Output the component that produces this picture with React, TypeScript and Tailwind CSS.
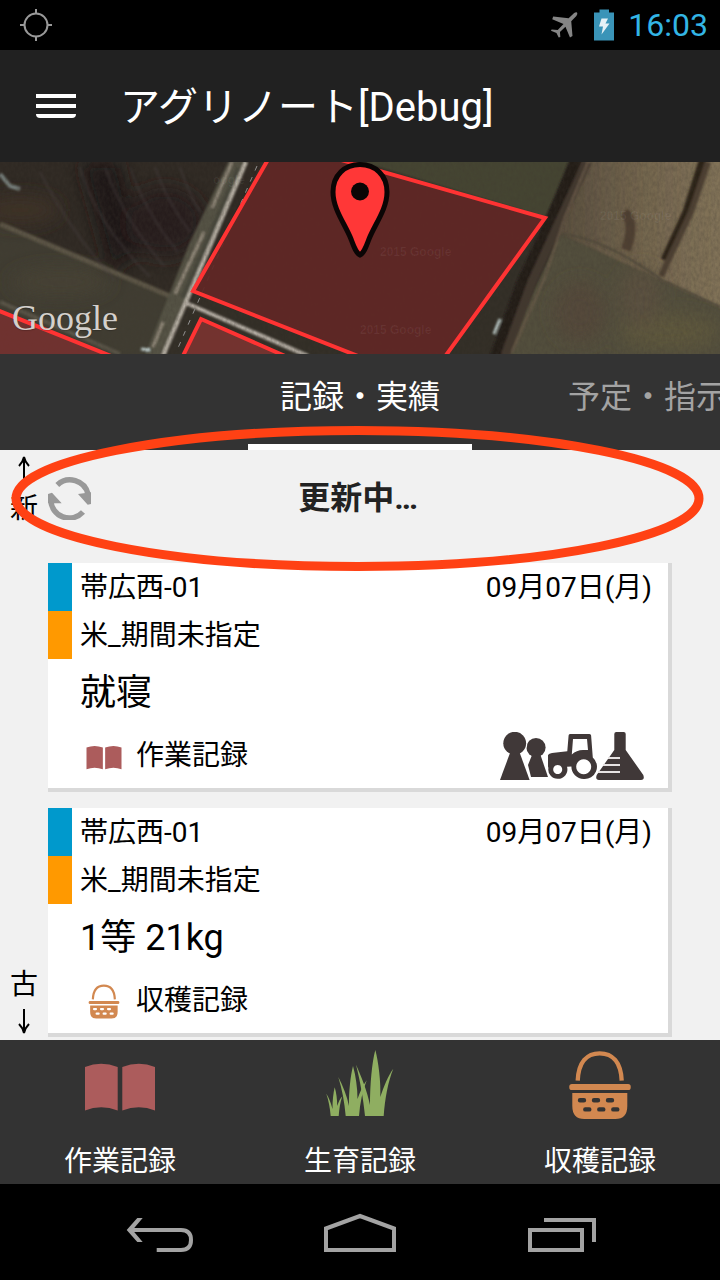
import type { ReactNode } from 'react'

function BookIcon({ className }: { className: string }) {
  return (
    <svg viewBox="0 0 72 72" className={className} fill="#ac5c5c" aria-hidden="true">
      <path d="M1 19Q17 12.5 33.7 19V62.5Q17 56 1 62.5Z" />
      <path d="M38.3 19Q55 12.5 71 19V62.5Q55 56 38.3 62.5Z" />
    </svg>
  )
}

function GrassIcon({ className }: { className: string }) {
  return (
    <svg viewBox="0 0 72 72" className={className} fill="#8fae61" aria-hidden="true">
      <path d="M6.7 68C6 60 4.5 52 2.3 45.7C5 50 7 55 8.5 61C8.4 53 9.3 45 10.7 39.3C12.3 45 13.2 51 13.2 58C14.5 54 16 51 18.3 48.3C16.3 54 15.2 61 14.7 68Z" />
      <path d="M21.7 68C20.5 54 18 41 14.3 29C19 38 23 48 25 58C24.8 43 26.5 28 29 18C31.8 28 33.5 40 33.5 51C36 44 39 37 42.7 32.3C38.5 43 36 55 35 68Z" />
      <path d="M41 68C39.5 52 36 32 32 16.7C37 28 43 42 46 57C46 36 48 14 51.3 2C54.5 14 57 34 56.3 49C60 38 64 28 69.3 20.7C64 34 61 50 59.7 68Z" />
    </svg>
  )
}

function BasketIcon({ className }: { className: string }) {
  return (
    <svg viewBox="0 0 72 72" className={className} aria-hidden="true">
      <path d="M13.7 32.7C14.5 14 23 5.3 35.7 5.3S56.9 14 57.7 32.7" fill="none" stroke="#d28850" strokeWidth="4.3" />
      <rect x="5.3" y="36" width="61.4" height="6" rx="2.6" fill="#d28850" />
      <path
        fill="#d28850"
        fillRule="evenodd"
        d="M8.3 45H63.3V58Q63.3 71 51.3 71H20.3Q8.3 71 8.3 58ZM16 50a2.2 2.2 0 0 0 0 4.4h4a2.2 2.2 0 0 0 0-4.4ZM30 50a2.2 2.2 0 0 0 0 4.4h4a2.2 2.2 0 0 0 0-4.4ZM44 50a2.2 2.2 0 0 0 0 4.4h4a2.2 2.2 0 0 0 0-4.4ZM21.3 59.2a2.2 2.2 0 0 0 0 4.4h4a2.2 2.2 0 0 0 0-4.4ZM35.3 59.2a2.2 2.2 0 0 0 0 4.4h4a2.2 2.2 0 0 0 0-4.4ZM49.3 59.2a2.2 2.2 0 0 0 0 4.4h4a2.2 2.2 0 0 0 0-4.4Z"
      />
    </svg>
  )
}

// workers, tractor and flask
function ResourceIcons() {
  return (
    <svg viewBox="0 0 144 48" className="h-12 w-36" fill="#403838" aria-hidden="true">
      <circle cx="36" cy="15.5" r="9.6" />
      <path d="M32 23H40.5L48 45H31L28 33Z" />
      <circle cx="14.7" cy="11.2" r="12.6" fill="#fff" />
      <circle cx="14.7" cy="11.2" r="11.4" />
      <path d="M10 21H19.8L29.6 48H0Z" />
      <path
        fillRule="evenodd"
        d="M48 23Q49 21.5 52 21L67.3 19.2L68.6 3.5Q68.7 2 70 2H89.5Q91 2 91.1 3.5L92.8 25.5A12.3 12.3 0 0 1 83.7 47A12.3 12.3 0 0 1 71.4 34.5L67 34.8A9.3 9.3 0 0 1 57.7 46.8A9.3 9.3 0 0 1 48.4 36L48 34.5ZM73 7L71.8 22.5Q76.5 18 83 18H88L87 7ZM83.7 27.2a7.5 7.5 0 1 0 .01 0ZM57.7 33a4.5 4.5 0 1 0 .01 0Z"
      />
      <path d="M114.3 2Q114.3 0 116.3 0H123.7Q125.7 0 125.7 2V18L143.3 43Q145 48 141 48H99Q95 48 96.7 43L114.3 18Z" />
      <path d="M108 26H120M103 33H120M98 40H120" stroke="#e6e2e2" strokeWidth="2" />
    </svg>
  )
}

function FieldMap() {
  return (
    <svg viewBox="0 0 720 192" preserveAspectRatio="xMidYMid slice" className="block h-48 w-full" role="img" aria-label="圃場マップ">
      <defs>
        <filter id="soft" x="-10%" y="-10%" width="120%" height="120%">
          <feGaussianBlur stdDeviation="1.2" />
        </filter>
        <filter id="haze" x="-30%" y="-30%" width="160%" height="160%">
          <feGaussianBlur stdDeviation="9" />
        </filter>
        <filter id="grain" x="0" y="0" width="100%" height="100%">
          <feTurbulence type="fractalNoise" baseFrequency="0.35 0.2" numOctaves="3" seed="4" />
          <feColorMatrix values="0 0 0 0 0.05  0 0 0 0 0.04  0 0 0 0 0.03  0 0.9 0 0 -0.25" />
        </filter>
        <linearGradient id="tan" x1="0" y1="0" x2="1" y2="0">
          <stop offset="0" stopColor="#5a4f3f" />
          <stop offset="0.5" stopColor="#75674f" />
          <stop offset="1" stopColor="#84755a" />
        </linearGradient>
      </defs>
      <rect width="720" height="192" fill="#2f2923" />
      <g filter="url(#soft)">
        <path d="M-5 60L178 137L150 200H-5Z" fill="#403d31" />
        <path d="M265 -5H575L548 60L495 200H160Z" fill="#312e28" />
        <path d="M345 -5H575L545 55Z" fill="#454431" />
        <path d="M580 -5H730V150L560 72Z" fill="url(#tan)" />
        <path d="M560 72L730 150V200H500Z" fill="#524f3c" />
      </g>
      <g filter="url(#haze)">
        <path d="M20 0H80L110 110L140 90L120 0Z" fill="#1e1816" />
        <ellipse cx="165" cy="60" rx="40" ry="35" fill="#261e1e" />
        <ellipse cx="20" cy="48" rx="40" ry="14" fill="#3e3027" />
        <ellipse cx="60" cy="120" rx="50" ry="14" fill="#474334" />
        <ellipse cx="670" cy="170" rx="50" ry="18" fill="#5f593c" />
        <ellipse cx="640" cy="135" rx="20" ry="30" fill="#5b5140" />
        <ellipse cx="580" cy="150" rx="25" ry="30" fill="#54493a" />
      </g>
      <g filter="url(#soft)" fill="none">
        <path d="M0 12L10 24L20 27" stroke="#77807d" strokeWidth="4" />
        <path d="M0 62L170 134" stroke="#5d5747" strokeWidth="5" />
        <path d="M0 140L120 192" stroke="#5c574a" strokeWidth="4" />
        <path d="M240 -4L198 84L152 200" stroke="#545245" strokeWidth="18" />
        <path d="M232 0L212 46M204 70L175 132M163 160L153 185" stroke="#92897a" strokeWidth="3" />
        <path d="M240 6L184 136" stroke="#48493d" strokeWidth="7" />
        <path d="M246 0L163 194" stroke="#bcb5a9" strokeWidth="4" />
        <path d="M186 141L308 194" stroke="#bcb5ab" strokeWidth="4" />
        <path d="M577 -5L553 55L523 120L494 200" stroke="#211b19" strokeWidth="12" />
        <path d="M587 0L563 52L532 120L505 194" stroke="#43382f" strokeWidth="9" />
        <path d="M588 0L565 55L545 115L512 190" stroke="#6b5c49" strokeWidth="2" />
        <path d="M703 -4L686 50L664 98" stroke="#2a2019" strokeWidth="7" />
        <path d="M708 0L691 50L661 114" stroke="#4d4033" strokeWidth="6" />
        <path d="M560 72Q600 74 662 118L720 145" stroke="#50483a" strokeWidth="2" />
        <path d="M624 50Q636 60 626 88" stroke="#4f4131" strokeWidth="10" />
        <path d="M500 157L494 172M141 187L150 188" stroke="#c2d2d0" strokeWidth="3" />
      </g>
      <path d="M257 4L178 186" stroke="#999" strokeWidth="1" strokeDasharray="5 7" fill="none" />
      <g fill="none" stroke="#4b4345" strokeWidth="1" opacity="0.3" filter="url(#soft)">
        <path d="M40 10Q70 70 115 118M80 5Q95 60 150 115M105 5Q122 55 165 105M130 5Q145 50 178 90M155 5Q167 40 190 70M180 5Q188 30 200 50" strokeWidth="3" />
      </g>
      <rect width="720" height="192" filter="url(#grain)" opacity="0.5" />
      <g stroke="#ff3333" strokeWidth="4">
        <path d="M278 -20L193 129L363 196H444L545 56Z" fill="#602725" fillOpacity="0.94" />
        <path d="M180 200L201 157L310 205Z" fill="#7a3431" fillOpacity="0.9" />
        <path d="M-8 146L116 196H-8Z" fill="#743130" fillOpacity="0.9" />
      </g>
      <g fontFamily="Liberation Sans, sans-serif" fontSize="12" fontWeight="bold" fill="#fff" fillOpacity="0.06">
        <text x="213" y="22">oogle</text>
        <text x="600" y="58">2015 Google</text>
        <text x="380" y="94">2015 Google</text>
        <text x="360" y="172">2015 Google</text>
      </g>
      <path d="M360 93C356 91 354 85 351 77C345 62 333 47 333 30C333 13 345 2.500 360 2.500S387 13 387 30C387 47 375 62 369 77C366 85 364 91 360 93Z" fill="#ff3737" stroke="#0b0505" strokeWidth="5" />
      <circle cx="360" cy="29.500" r="9" fill="#0b0505" />
    </svg>
  )
}

function RecordCard({ title, icon, kind, extra }: { title: string; icon: ReactNode; kind: string; extra?: ReactNode }) {
  return (
    <article className="border-r-4 border-b-4 border-[#d9d9d9] bg-white text-black">
      <div className="flex">
        <div className="w-6 shrink-0">
          <div className="h-12 bg-[#0099cc]" />
          <div className="h-12 bg-[#ff9900]" />
        </div>
        <div className="min-w-0 flex-1 pr-4 pl-2 text-[28px] leading-[50px]">
          <div className="flex h-12 justify-between">
            <span>帯広西-01</span>
            <time dateTime="2015-09-07">09月07日(月)</time>
          </div>
          <div className="h-12">米_期間未指定</div>
        </div>
      </div>
      <h2 className="h-16 pl-8 text-4xl leading-[68px]">{title}</h2>
      <div className="flex h-[65px] items-center justify-between pr-6 pl-[38px]">
        <div className="flex items-center gap-3.5 text-[28px]">
          {icon}
          <span>{kind}</span>
        </div>
        {extra}
      </div>
    </article>
  )
}

const actions = [
  { label: '作業記録', icon: <BookIcon className="size-18" /> },
  { label: '生育記録', icon: <GrassIcon className="size-18" /> },
  { label: '収穫記録', icon: <BasketIcon className="size-18" /> },
]

export default function App() {
  return (
    <div className="flex min-h-screen flex-col overflow-x-hidden bg-black font-['Roboto','Noto_Sans_CJK_JP',sans-serif]" lang="ja">
      {/* Status bar */}
      <div className="flex h-[50px] items-center justify-between pr-3 pl-5">
        <svg viewBox="0 0 32 32" className="size-8" fill="none" stroke="#999" strokeWidth="2" aria-hidden="true">
          <circle cx="16" cy="16" r="11.5" />
          <path d="M16 0V5M16 27V32M0 16H5M27 16H32" />
        </svg>
        <div className="flex items-center">
          <svg viewBox="0 0 29 28" className="mr-4 h-7 w-7" fill="#858585" aria-hidden="true">
            <path d="M3.300 5.300L2.300 8L14 13L8 19.300L1.700 18.700L1 20L6.700 22.300L9 27L10.700 26.300L10.300 21.300L16 15.700L20.700 27L23.300 25.300L22 10L27.300 4.700Q29 2 28 1Q26.500 .5 25 1.700L19.300 7Z" />
          </svg>
          <svg viewBox="0 0 20 31" className="mr-3.5 h-8 w-5" aria-hidden="true">
            <path d="M0 3H5.500V0H15V3H20V31H0Z" fill="#3a94b8" />
            <path d="M7.500 9H14L11.500 14H15.500L7.500 25L9 17H5Z" fill="#e5f1f6" />
          </svg>
          <span className="text-[32px] leading-[50px] text-[#33b5e5]">16:03</span>
        </div>
      </div>

      {/* Header */}
      <header className="flex h-28 items-center bg-[#212121] pl-9 text-white">
        <button type="button" aria-label="メニュー" className="flex w-10 flex-col gap-1.5">
          <span className="h-1 w-full bg-white" />
          <span className="h-1 w-full bg-white" />
          <span className="h-1 w-full rounded-b-sm bg-white" />
        </button>
        <h1 className="ml-11 pt-1 text-[40px] whitespace-nowrap">アグリノート[Debug]</h1>
      </header>

      {/* Map */}
      <div className="relative">
        <FieldMap />
        <span className="absolute bottom-3 left-3 font-['Liberation_Serif',serif] text-4xl leading-12 text-[#d4d0cc] text-shadow-xs">
          Google
        </span>
      </div>

      {/* Tabs */}
      <nav className="grid h-24 grid-cols-[1fr_auto_1fr] bg-[#333] text-[32px] whitespace-nowrap">
        <button type="button" className="col-start-2 border-b-6 border-white px-8 pb-1 text-white">記録・実績</button>
        <div className="flex min-w-0 overflow-hidden pl-24">
          <button type="button" className="shrink-0 pb-2.5 text-[#a3a3a3]">予定・指示</button>
        </div>
      </nav>

      {/* Timeline */}
      <main className="relative flex flex-1 bg-[#f1f1f1]">
        <div className="flex w-12 shrink-0 flex-col items-center justify-between py-1.5 text-[28px] leading-7 text-black">
          <div className="flex flex-col items-center gap-3.5">
            <svg viewBox="0 0 12 25" className="h-[25px] w-3" fill="none" stroke="currentColor" strokeWidth="2" aria-hidden="true">
              <path d="M6 25V1M1 10Q5 6 6 1Q7 6 11 10" />
            </svg>
            <span>新</span>
          </div>
          <div className="flex flex-col items-center gap-2.5">
            <span>古</span>
            <svg viewBox="0 0 12 25" className="h-[25px] w-3" fill="none" stroke="currentColor" strokeWidth="2" aria-hidden="true">
              <path d="M6 0V24M1 15Q5 19 6 24Q7 19 11 15" />
            </svg>
          </div>
        </div>

        <div className="min-w-0 flex-1 pr-12 pb-[3px]">
          <div className="mb-[17px] flex h-24 items-center">
            <svg viewBox="0 0 44 44" className="size-11 shrink-0" aria-hidden="true">
              <path d="M9.300 9A18.500 18.500 0 0 1 40 18M35 36A18.500 18.500 0 0 1 2.800 24" fill="none" stroke="#999" strokeWidth="5.500" />
              <path d="M30 18L43 16.300V28L39.700 28.700ZM13.700 27.300H0V18L4 16.700Z" fill="#999" />
            </svg>
            <p className="flex-1 pr-12 text-center text-[32px] font-bold text-[#222]">更新中…</p>
          </div>
          <div className="space-y-4">
            <RecordCard title="就寝" icon={<BookIcon className="size-9" />} kind="作業記録" extra={<ResourceIcons />} />
            <RecordCard title="1等 21kg" icon={<BasketIcon className="size-9" />} kind="収穫記録" />
          </div>
        </div>

        {/* Highlight ring */}
        <svg className="pointer-events-none absolute -top-6 right-4 left-3 h-[145px] w-[calc(100%-28px)] overflow-visible" viewBox="0 0 692 145" preserveAspectRatio="none" aria-hidden="true">
          <ellipse cx="345.500" cy="72.500" rx="341.500" ry="68" fill="none" stroke="#ff4114" strokeWidth="9" vectorEffect="non-scaling-stroke" />
        </svg>
      </main>

      {/* Record actions */}
      <footer className="grid grid-cols-3 bg-[#333] text-[28px] text-white">
        {actions.map((a) => (
          <button type="button" key={a.label} className="flex flex-col items-center pt-2 leading-11">
            {a.icon}
            <span className="mt-5">{a.label}</span>
          </button>
        ))}
      </footer>

      {/* System navigation */}
      <nav className="grid h-24 grid-cols-3 items-center justify-items-center px-15">
        <button type="button" aria-label="戻る">
          <svg viewBox="0 0 80 48" className="h-12 w-20" fill="none" stroke="#a3a3a3" strokeWidth="4">
            <path d="M10 22H61Q71 22 71 32T61 42H36.700" />
            <path d="M17.300 10L6.700 22L17.300 34H22.700L12.500 22L22.700 10Z" fill="#a3a3a3" stroke="none" />
          </svg>
        </button>
        <button type="button" aria-label="ホーム">
          <svg viewBox="0 0 80 48" className="h-12 w-20" fill="none" stroke="#a3a3a3" strokeWidth="4">
            <path d="M6 20.500L40 8L74 20.500V42H6Z" />
          </svg>
        </button>
        <button type="button" aria-label="履歴">
          <svg viewBox="0 0 80 48" className="h-12 w-20" fill="none" stroke="#a3a3a3" strokeWidth="4">
            <path d="M10 22H62V42H10ZM24 12H74V34" />
          </svg>
        </button>
      </nav>
    </div>
  )
}
